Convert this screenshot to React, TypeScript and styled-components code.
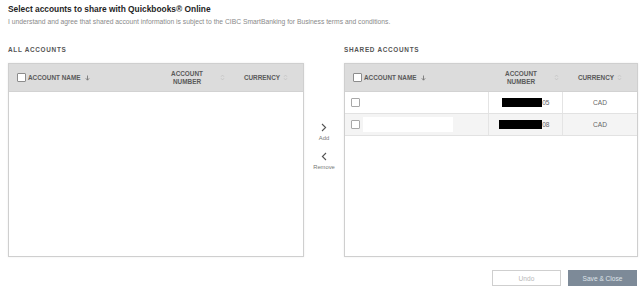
import styled, { createGlobalStyle } from "styled-components";

const GlobalStyle = createGlobalStyle`
	html, body {
		margin: 0;
		padding: 0;
		background: #ffffff;
		font-family: "Liberation Sans", Arial, sans-serif;
	}
`;

const SortArrow = () => (
	<svg width="5" height="6" viewBox="0 0 5 6">
		<path d="M2.5 0.5 V5 M0.8 3.3 L2.5 5.2 L4.2 3.3" stroke="#777" strokeWidth="0.9" fill="none" />
	</svg>
);

const SortBoth = () => (
	<svg width="5" height="7" viewBox="0 0 5 7">
		<path d="M1 2.8 L2.5 1 L4 2.8 M1 4.2 L2.5 6 L4 4.2" stroke="#c4c4c4" strokeWidth="0.8" fill="none" />
	</svg>
);

const Chevron = ({ dir }: { dir: "left" | "right" }) => (
	<svg width="6" height="9" viewBox="0 0 6 9">
		<path
			d={dir === "right" ? "M1 1 L4.6 4.5 L1 8" : "M5 1 L1.4 4.5 L5 8"}
			stroke="#555"
			strokeWidth="1.1"
			fill="none"
		/>
	</svg>
);

type Row = { number: string; currency: string; masked: number; covered?: boolean };

const shared: Row[] = [
	{ number: "05", currency: "CAD", masked: 40 },
	{ number: "08", currency: "CAD", masked: 43, covered: true },
];

const TableHeader = () => (
	<StyledHead>
		<StyledHeadName>
			<StyledCheck $head />
			ACCOUNT NAME
			<SortArrow />
		</StyledHeadName>
		<StyledHeadNumber>
			<span>ACCOUNT<br />NUMBER</span>
			<SortBoth />
		</StyledHeadNumber>
		<StyledHeadCurrency>
			CURRENCY
			<SortBoth />
		</StyledHeadCurrency>
	</StyledHead>
);

const App = () => {
	return (
		<StyledPage>
			<GlobalStyle />
			<StyledTitle>Select accounts to share with Quickbooks® Online</StyledTitle>
			<StyledNote>
				I understand and agree that shared account information is subject to the CIBC SmartBanking for Business terms and conditions.
			</StyledNote>

			<StyledColumns>
				<div>
					<StyledLabel>ALL ACCOUNTS</StyledLabel>
					<StyledPanel>
						<TableHeader />
					</StyledPanel>
				</div>

				<StyledMover>
					<StyledMove>
						<Chevron dir="right" />
						<span>Add</span>
					</StyledMove>
					<StyledMove>
						<Chevron dir="left" />
						<span>Remove</span>
					</StyledMove>
				</StyledMover>

				<div>
					<StyledLabel>SHARED ACCOUNTS</StyledLabel>
					<StyledPanel>
						<TableHeader />
						{shared.map((row, i) => (
							<StyledRow key={i} $alt={i % 2 === 1}>
								<StyledCell>
									<StyledCheck />
									{row.covered && <StyledCover />}
								</StyledCell>
								<StyledNumberCell>
									<StyledMask style={{ width: row.masked }} />
									{row.number}
								</StyledNumberCell>
								<StyledCurrencyCell>{row.currency}</StyledCurrencyCell>
							</StyledRow>
						))}
					</StyledPanel>
				</div>
			</StyledColumns>

			<StyledActions>
				<StyledButton>Undo</StyledButton>
				<StyledButton $primary>Save &amp; Close</StyledButton>
			</StyledActions>
		</StyledPage>
	);
};

const StyledPage = styled.div`
	width: 642px;
	height: 289px;
	box-sizing: border-box;
	padding: 4px 4px 0 8px;
	overflow: hidden;
`;

const StyledTitle = styled.div`
	font-size: 8.4px;
	line-height: 11px;
	font-weight: 700;
	color: #1f1f1f;
`;

const StyledNote = styled.div`
	margin-top: 2px;
	font-size: 6.75px;
	line-height: 10px;
	color: #8a8a8a;
`;

const StyledColumns = styled.div`
	display: grid;
	grid-template-columns: 296px 40px 294px;
	margin-top: 18px;
`;

const StyledLabel = styled.div`
	font-size: 6.4px;
	line-height: 10px;
	font-weight: 700;
	letter-spacing: 0.7px;
	color: #555;
	margin-bottom: 8px;
`;

const StyledPanel = styled.div`
	height: 194px;
	box-sizing: border-box;
	border: 1px solid #cfcfcf;
	box-shadow: 0 0 2px rgba(0, 0, 0, 0.08);
	background: #fff;
`;

const StyledHead = styled.div`
	display: grid;
	grid-template-columns: 1fr 75px 74px;
	height: 27px;
	background: #dcdcdc;
	border-bottom: 1px solid #d2d2d2;
	font-size: 6.4px;
	font-weight: 700;
	color: #5a5a5a;
	align-items: center;
`;

const StyledHeadName = styled.div`
	display: flex;
	align-items: center;
	gap: 2px;
	padding-left: 8px;

	svg {
		margin-left: 2px;
	}
`;

const StyledHeadNumber = styled.div`
	display: flex;
	align-items: center;
	line-height: 7.5px;

	span {
		width: 66px;
		text-align: center;
	}
`;

const StyledHeadCurrency = styled.div`
	display: flex;
	align-items: center;
	justify-content: center;
	gap: 3px;
`;

const StyledCheck = styled.span<{ $head?: boolean }>`
	display: inline-block;
	width: 7px;
	height: 7px;
	border: 1px solid ${(p) => (p.$head ? "#8c8c8c" : "#a8a8a8")};
	border-radius: 1px;
	background: #fff;
	flex: none;
`;

const StyledRow = styled.div<{ $alt: boolean }>`
	display: grid;
	grid-template-columns: 1fr 75px 74px;
	height: 22px;
	box-sizing: border-box;
	border-bottom: 1px solid #e2e2e2;
	background: ${(p) => (p.$alt ? "#f4f4f4" : "#fff")};
	font-size: 6.6px;
	color: #666;
`;

const StyledCell = styled.div`
	display: flex;
	align-items: center;
	gap: 3px;
	padding-left: 6px;
`;

const StyledCover = styled.span`
	display: block;
	width: 90px;
	height: 15px;
	background: #fff;
`;

const StyledNumberCell = styled.div`
	display: flex;
	align-items: center;
	justify-content: flex-end;
	padding-right: 13px;
	border-left: 1px solid #e4e4e4;
	border-right: 1px solid #e4e4e4;
	letter-spacing: -0.3px;
`;

const StyledMask = styled.span`
	display: block;
	height: 9px;
	background: #000;
`;

const StyledCurrencyCell = styled.div`
	display: flex;
	align-items: center;
	justify-content: center;
`;

const StyledMover = styled.div`
	display: flex;
	flex-direction: column;
	align-items: center;
	gap: 11px;
	padding-top: 78px;
`;

const StyledMove = styled.div`
	display: flex;
	flex-direction: column;
	align-items: center;
	gap: 3px;
	font-size: 5.8px;
	color: #777;
`;

const StyledActions = styled.div`
	display: flex;
	justify-content: flex-end;
	gap: 7px;
	margin-top: 13px;
	padding-right: 1px;
`;

const StyledButton = styled.div<{ $primary?: boolean }>`
	width: 69px;
	height: 16px;
	box-sizing: border-box;
	display: flex;
	align-items: center;
	justify-content: center;
	font-size: 6.6px;
	border: 1px solid ${(p) => (p.$primary ? "#7d8a98" : "#cfcfcf")};
	background: ${(p) => (p.$primary ? "#7d8a98" : "#fff")};
	color: ${(p) => (p.$primary ? "#dfe4ea" : "#b8b8b8")};
`;

export default App;
